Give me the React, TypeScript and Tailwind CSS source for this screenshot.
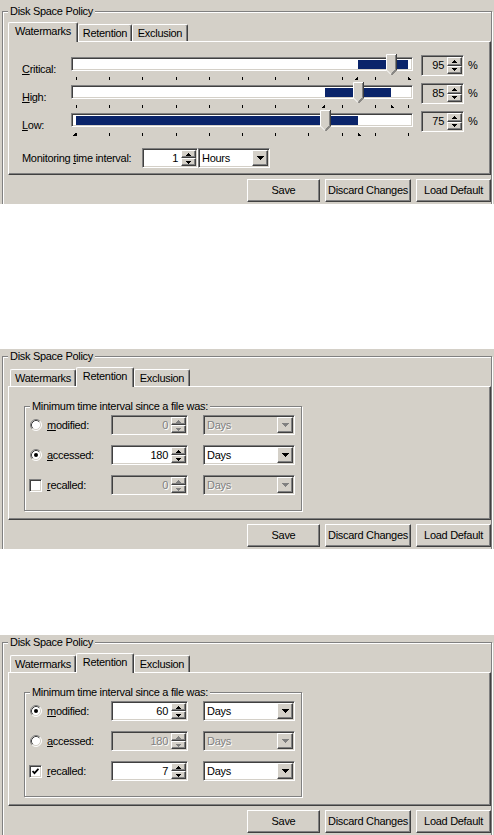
import type { ReactNode } from 'react';

const FONT =
  "font-['Liberation_Sans',Arial,sans-serif] text-[11px] leading-none tracking-[-0.3px] text-black";

// classic win2k bevels
const sunken =
  'border border-t-[#808080] border-l-[#808080] border-r-white border-b-white shadow-[inset_1px_1px_0_#404040,inset_-1px_-1px_0_#d4d0c8]';
const raised =
  'border border-t-white border-l-white border-r-[#404040] border-b-[#404040] shadow-[inset_-1px_-1px_0_#808080]';
const etched = 'border border-[#808080] shadow-[inset_1px_1px_0_#fff,1px_1px_0_#fff]';
const dim = 'text-[#808080] [text-shadow:1px_1px_0_#fff]';

type TabName = 'Watermarks' | 'Retention' | 'Exclusion';

function Arrow({ widths, color }: { widths: number[]; color: string }) {
  const w = Math.max(...widths);
  return (
    <svg width={w} height={widths.length} viewBox={`0 0 ${w} ${widths.length}`} shapeRendering="crispEdges">
      {widths.map((rw, i) => (
        <rect key={i} x={(w - rw) / 2} y={i} width={rw} height={1} fill={color} />
      ))}
    </svg>
  );
}

function Spinner({ disabled }: { disabled?: boolean }) {
  const c = disabled ? '#808080' : '#000';
  return (
    <div className="flex w-[15px] flex-col">
      <div className={`flex flex-1 items-center justify-center bg-[#d4d0c8] ${raised}`}>
        <Arrow widths={[1, 3, 5]} color={c} />
      </div>
      <div className={`flex flex-1 items-center justify-center bg-[#d4d0c8] ${raised}`}>
        <Arrow widths={[5, 3, 1]} color={c} />
      </div>
    </div>
  );
}

function SpinEdit({ value, className, disabled }: { value: string; className: string; disabled?: boolean }) {
  return (
    <div className={`flex p-px ${sunken} ${className}`}>
      <span className={`flex flex-1 items-center justify-end pr-[3px] ${disabled ? dim : ''}`}>{value}</span>
      <Spinner disabled={disabled} />
    </div>
  );
}

function Combo({ value, className, disabled }: { value: string; className: string; disabled?: boolean }) {
  return (
    <div className={`flex p-px ${sunken} ${className}`}>
      <span className={`flex flex-1 items-center pl-[2px] ${disabled ? dim : ''}`}>{value}</span>
      <div className={`flex w-[16px] items-center justify-center bg-[#d4d0c8] ${raised}`}>
        <Arrow widths={[7, 5, 3, 1]} color={disabled ? '#808080' : '#000'} />
      </div>
    </div>
  );
}

function Radio({ checked }: { checked?: boolean }) {
  return (
    <svg width="12" height="12" viewBox="0 0 12 12" className="shrink-0">
      <circle cx="6" cy="6" r="5" fill="#fff" />
      <path d="M2.11 9.89 A5.5 5.5 0 0 1 9.89 2.11" stroke="#808080" fill="none" />
      <path d="M9.89 2.11 A5.5 5.5 0 0 1 2.11 9.89" stroke="#fff" fill="none" />
      <path d="M2.82 9.18 A4.5 4.5 0 0 1 9.18 2.82" stroke="#404040" fill="none" />
      <path d="M9.18 2.82 A4.5 4.5 0 0 1 2.82 9.18" stroke="#d4d0c8" fill="none" />
      {checked && <circle cx="6" cy="6" r="2" fill="#000" />}
    </svg>
  );
}

function Check({ checked }: { checked?: boolean }) {
  return (
    <div className={`flex h-[13px] w-[13px] shrink-0 items-center justify-center bg-white ${sunken}`}>
      {checked && (
        <svg width="7" height="7" viewBox="0 0 7 7">
          <path d="M0.5 3 L2.5 5.2 L6.5 0.8" stroke="#000" strokeWidth="1.8" fill="none" />
        </svg>
      )}
    </div>
  );
}

function Thumb({ left }: { left: number }) {
  return (
    <svg width="11" height="22" viewBox="0 0 11 22" className="absolute top-0" style={{ left }}>
      <path d="M0 0 H11 V16 L5.5 21.5 L0 16 Z" fill="#d4d0c8" />
      <path d="M0.5 16 V0.5 H10" stroke="#fff" fill="none" />
      <path d="M0.5 16 L5 20.5" stroke="#fff" fill="none" />
      <path d="M10.5 0 V16 L5.5 21" stroke="#404040" fill="none" />
      <path d="M9.5 1 V15.6 L5.5 19.6" stroke="#808080" fill="none" />
    </svg>
  );
}

const TICKS = [0, 10, 20, 30, 40, 50, 60, 70, 80, 90, 100];
const px = (v: number) => Math.round(5 + v * 3.32);

function Slider({ value, from, to }: { value: number; from: number; to: number }) {
  return (
    <div className="relative h-[28px] w-[342px]">
      <div className={`mt-[3px] h-[14px] bg-white ${sunken}`} />
      <div className="absolute top-[6px] h-[9px] bg-[#0a246a]" style={{ left: px(from), width: px(to) - px(from) }} />
      {TICKS.map((t) => (
        <div key={t} className="absolute top-[23px] h-[3px] w-px bg-black" style={{ left: px(t) }} />
      ))}
      <svg width="3" height="3" viewBox="0 0 3 3" className="absolute top-[23px]" style={{ left: px(from) - 3 }} shapeRendering="crispEdges">
        <path d="M2 0h1v3H0V2h1V1h1z" fill="#000" />
      </svg>
      <svg width="3" height="3" viewBox="0 0 3 3" className="absolute top-[23px]" style={{ left: px(to) }} shapeRendering="crispEdges">
        <path d="M0 0h1v1h1v1h1v1H0z" fill="#000" />
      </svg>
      <Thumb left={px(value) - 5} />
    </div>
  );
}

function SliderRow({ label, value, from, to }: { label: ReactNode; value: number; from: number; to: number }) {
  return (
    <div className="flex h-[28px]">
      <div className="w-[49px] pt-[10px]">{label}</div>
      <Slider value={value} from={from} to={to} />
      <SpinEdit value={String(value)} className="mt-[1px] ml-[8px] h-[21px] w-[43px] bg-[#d4d0c8]" />
      <span className="ml-[4px] pt-[6px]">%</span>
    </div>
  );
}

function Tabs({ active }: { active: TabName }) {
  const tabs: { name: TabName; on: string; off: string }[] = [
    { name: 'Watermarks', on: '-ml-[2px] -mr-[2px] w-[70px]', off: 'w-[66px]' },
    { name: 'Retention', on: 'w-[58px]', off: 'ml-[2px] w-[54px]' },
    { name: 'Exclusion', on: '-ml-[2px] -mr-[2px] w-[60px]', off: 'w-[56px]' },
  ];
  return (
    <div className="flex h-[19px] items-end pl-[2px]">
      {tabs.map((t) =>
        t.name === active ? (
          <div
            key={t.name}
            className={`relative z-10 -mb-px flex h-[20px] items-start justify-center rounded-t-[2px] border-t border-l border-r border-t-white border-l-white border-r-[#404040] bg-[#d4d0c8] pt-[3px] shadow-[inset_-1px_0_0_#808080] ${t.on}`}
          >
            {t.name}
          </div>
        ) : (
          <div
            key={t.name}
            className={`flex h-[17px] items-start justify-center rounded-t-[2px] border-t border-l border-r border-t-white border-l-white border-r-[#404040] bg-[#d4d0c8] pt-[3px] shadow-[inset_-1px_0_0_#808080] ${t.off}`}
          >
            {t.name}
          </div>
        ),
      )}
    </div>
  );
}

function Dialog({ active, first, children }: { active: TabName; first?: boolean; children: ReactNode }) {
  return (
    <div className={first ? 'h-[204px] overflow-hidden bg-[#d4d0c8] pt-[11px]' : 'h-[200px] overflow-hidden bg-[#d4d0c8] pt-[7px]'}>
      <div className={`relative ml-[2px] h-[230px] w-[490px] ${etched}`}>
        <span className="absolute top-[-7px] left-[5px] flex h-[13px] items-center bg-[#d4d0c8] px-[2px]">
          Disk Space Policy
        </span>
        <div className="pt-[10px] pl-[5px]">
          <Tabs active={active} />
          <div className="h-[134px] w-[483px] border border-t-white border-l-white border-r-[#404040] border-b-[#404040] shadow-[inset_-1px_-1px_0_#808080]">
            {children}
          </div>
          <div className="mt-[4px] flex justify-end gap-[5px]">
            <button className={`h-[23px] w-[73px] bg-[#d4d0c8] ${raised}`}>Save</button>
            <button className={`h-[23px] w-[86px] bg-[#d4d0c8] ${raised}`}>Discard Changes</button>
            <button className={`h-[23px] w-[75px] bg-[#d4d0c8] ${raised}`}>Load Default</button>
          </div>
        </div>
      </div>
    </div>
  );
}

function Watermarks() {
  return (
    <div className="pt-[12px] pl-[13px]">
      <SliderRow label={<><u>C</u>ritical:</>} value={95} from={85} to={100} />
      <SliderRow label={<><u>H</u>igh:</>} value={85} from={75} to={95} />
      <SliderRow label={<><u>L</u>ow:</>} value={75} from={0} to={85} />
      <div className="mt-[10px] flex h-[20px] items-center">
        <span className="w-[120px]">
          Monitoring <u>t</u>ime interval:
        </span>
        <SpinEdit value="1" className="h-[20px] w-[56px] bg-white" />
        <Combo value="Hours" className="h-[20px] w-[72px] bg-white" />
      </div>
    </div>
  );
}

type RowState = { label: ReactNode; kind: 'radio' | 'check'; on: boolean; value: string };

function Retention({ rows }: { rows: RowState[] }) {
  return (
    <div className="mt-[19px] ml-[15px]">
      <div className={`relative h-[105px] w-[278px] ${etched}`}>
        <span className="absolute top-[-7px] left-[5px] flex h-[13px] items-center bg-[#d4d0c8] px-[2px]">
          Minimum time interval since a file was:
        </span>
        <div className="flex flex-col gap-[10px] pt-[8px]">
          {rows.map((r, i) => (
            <div key={i} className="flex h-[20px] items-center">
              <div className={r.kind === 'radio' ? 'flex w-[86px] items-center pl-[5px]' : 'flex w-[86px] items-center pl-[4px]'}>
                {r.kind === 'radio' ? <Radio checked={r.on} /> : <Check checked={r.on} />}
                <span className="ml-[5px]">{r.label}</span>
              </div>
              <SpinEdit
                value={r.value}
                disabled={!r.on}
                className={r.on ? 'h-[20px] w-[77px] bg-white' : 'h-[20px] w-[77px] bg-[#d4d0c8]'}
              />
              <Combo
                value="Days"
                disabled={!r.on}
                className={r.on ? 'ml-[15px] h-[20px] w-[92px] bg-white' : 'ml-[15px] h-[20px] w-[92px] bg-[#d4d0c8]'}
              />
            </div>
          ))}
        </div>
      </div>
    </div>
  );
}

export default function App() {
  return (
    <div className={`h-[835px] w-[494px] bg-white ${FONT}`}>
      <Dialog active="Watermarks" first>
        <Watermarks />
      </Dialog>
      <div className="mt-[145px]">
        <Dialog active="Retention">
          <Retention
            rows={[
              { label: <><u>m</u>odified:</>, kind: 'radio', on: false, value: '0' },
              { label: <><u>a</u>ccessed:</>, kind: 'radio', on: true, value: '180' },
              { label: <><u>r</u>ecalled:</>, kind: 'check', on: false, value: '0' },
            ]}
          />
        </Dialog>
      </div>
      <div className="mt-[86px]">
        <Dialog active="Retention">
          <Retention
            rows={[
              { label: <><u>m</u>odified:</>, kind: 'radio', on: true, value: '60' },
              { label: <><u>a</u>ccessed:</>, kind: 'radio', on: false, value: '180' },
              { label: <><u>r</u>ecalled:</>, kind: 'check', on: true, value: '7' },
            ]}
          />
        </Dialog>
      </div>
    </div>
  );
}
